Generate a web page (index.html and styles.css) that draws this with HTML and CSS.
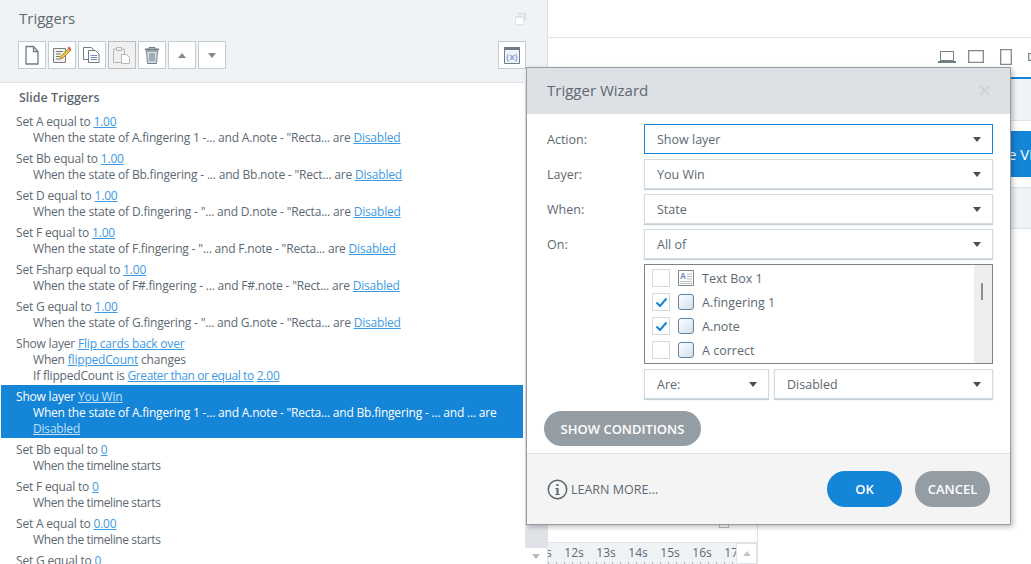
FILE: index.html
```html
<!DOCTYPE html>
<html lang="en">
<head>
    <meta charset="UTF-8">
    <title>Triggers</title>
    <link rel="stylesheet" href="styles.css">
</head>
<body>
    <div class="app">
        <!-- painel esquerdo -->
        <section class="panel">
            <header class="panel-head">
                <div class="panel-title">
                    <h1>Triggers</h1>
                    <svg class="restore" width="12" height="13" viewBox="0 0 12 13"><path d="M3 0.5h8.5v8H9V3H3z" fill="#dfe4e8"/><path d="M0.5 4.5h8v8h-8z" fill="#fff" stroke="#dfe4e8"/><path d="M0 4h9v2H0z" fill="#dfe4e8"/></svg>
                </div>
                <div class="toolbar">
                    <button class="tool"><svg width="20" height="22" viewBox="0 0 20 22"><path d="M4 2.500h7.500l4.500 5v12.500H4zM11.500 2.500v5h4.500" fill="#fff" stroke="#6f7d84" stroke-width="1.300"/></svg></button>
                    <button class="tool"><svg width="22" height="20" viewBox="0 0 22 20"><path d="M2.500 3.500h12v14h-12z" fill="#f2f2ee" stroke="#7b7f80"/><path d="M5 6.500h7M5 9h5M5 11.500h4M5 14h4" stroke="#777"/><path d="M9 14l1-3 8-8 2 2-8 8z" fill="#f2bf3a" stroke="#8a6a20" stroke-width=".6"/><path d="M16.500 3l1.500-1.500 2 2L18.500 5z" fill="#d9534f"/></svg></button>
                    <button class="tool"><svg width="22" height="20" viewBox="0 0 22 20"><path d="M2.500 2.500h8l2.500 3v9h-10.500z" fill="#fff" stroke="#6f7d84"/><path d="M7.500 5.500h7l3.500 3.500v8.500H7.500z" fill="#fff" stroke="#6f7d84"/><path d="M9.500 10.500h6.500M9.500 12.500h6.500M9.500 14.500h6.500" stroke="#6d8fc4"/></svg></button>
                    <button class="tool tool-off"><svg width="22" height="20" viewBox="0 0 22 20"><path d="M2.500 4h11v13.500h-11z" fill="#efefef" stroke="#b2b8bb"/><path d="M5.500 2.500h5v3h-5z" fill="#efefef" stroke="#b2b8bb"/><path d="M10.500 9.500h5l3 3v6h-8z" fill="#fff" stroke="#b2b8bb"/></svg></button>
                    <button class="tool"><svg width="20" height="22" viewBox="0 0 20 22"><path d="M3 5.500h14" stroke="#6f7d84" stroke-width="2"/><path d="M7 5V3.500h6V5" fill="none" stroke="#6f7d84"/><path d="M4.500 7h11l-1 12.500h-9z" fill="#d5dfe3" stroke="#6f7d84"/><path d="M8 9v8.500M10 9v8.500M12 9v8.500" stroke="#6f7d84"/></svg></button>
                    <button class="tool"><span class="tri-up"></span></button>
                    <button class="tool"><span class="tri-down"></span></button>
                    <button class="tool tool-var"><svg width="16" height="17" viewBox="0 0 16 17"><path d="M.5 .5h15v16H.5z" fill="#eef1f6" stroke="#6f7d84"/><path d="M0 0h16v3H0z" fill="#6f7d84"/><text x="8" y="13" class="var-text">(x)</text></svg></button>
                </div>
            </header>
            <div class="panel-body">
                <div class="trigger-list">
                    <h2>Slide Triggers</h2>
                    <div class="trigger">
                        <div>Set A equal to <a>1.00</a></div>
                        <div class="sub">When the state of A.fingering 1 -... and A.note - "Recta... are <a>Disabled</a></div>
                    </div>
                    <div class="trigger">
                        <div>Set Bb equal to <a>1.00</a></div>
                        <div class="sub">When the state of Bb.fingering - ... and Bb.note - "Rect... are <a>Disabled</a></div>
                    </div>
                    <div class="trigger">
                        <div>Set D equal to <a>1.00</a></div>
                        <div class="sub">When the state of D.fingering - "... and D.note - "Recta... are <a>Disabled</a></div>
                    </div>
                    <div class="trigger">
                        <div>Set F equal to <a>1.00</a></div>
                        <div class="sub">When the state of F.fingering - "... and F.note - "Recta... are <a>Disabled</a></div>
                    </div>
                    <div class="trigger">
                        <div>Set Fsharp equal to <a>1.00</a></div>
                        <div class="sub">When the state of F#.fingering - ... and F#.note - "Rect... are <a>Disabled</a></div>
                    </div>
                    <div class="trigger">
                        <div>Set G equal to <a>1.00</a></div>
                        <div class="sub">When the state of G.fingering - "... and G.note - "Recta... are <a>Disabled</a></div>
                    </div>
                    <div class="trigger">
                        <div>Show layer <a>Flip cards back over</a></div>
                        <div class="sub">When <a>flippedCount</a> changes</div>
                        <div class="sub">If flippedCount is <a class="tight">Greater than or equal to</a> <a>2.00</a></div>
                    </div>
                    <div class="trigger selected">
                        <div>Show layer <a>You Win</a></div>
                        <div class="sub">When the state of A.fingering 1 -... and A.note - "Recta... and Bb.fingering - ... and ... are</div>
                        <div class="sub"><a>Disabled</a></div>
                    </div>
                    <div class="trigger">
                        <div>Set Bb equal to <a>0</a></div>
                        <div class="sub tight">When the timeline starts</div>
                    </div>
                    <div class="trigger">
                        <div>Set F equal to <a>0</a></div>
                        <div class="sub tight">When the timeline starts</div>
                    </div>
                    <div class="trigger">
                        <div>Set A equal to <a>0.00</a></div>
                        <div class="sub tight">When the timeline starts</div>
                    </div>
                    <div class="trigger">
                        <div>Set G equal to <a>0</a></div>
                    </div>
                </div>
                <div class="list-scroll">
                    <div class="list-scroll-track"></div>
                    <div class="list-scroll-btn"><span class="tri-down light"></span></div>
                </div>
            </div>
        </section>

        <!-- palco atras do dialogo -->
        <section class="stage">
            <div class="stage-top"></div>
            <div class="devices">
                <svg width="18" height="14" viewBox="0 0 18 14"><path d="M2.500 1.500h13v9h-13z" fill="#fff" stroke="#6f7d84"/><path d="M0 11h18v2H0z" fill="#6f7d84"/></svg>
                <svg width="16" height="13" viewBox="0 0 16 13"><path d="M.7 .7h14.600v11.600H.7z" fill="#fff" stroke="#7c8a90" stroke-width="1.300"/></svg>
                <svg class="phone-v" width="12" height="16" viewBox="0 0 12 16"><path d="M.7 .7h10.600v14.600H.7z" fill="#fff" stroke="#7c8a90" stroke-width="1.300"/></svg>
                <svg class="phone-h" width="8" height="8" viewBox="0 0 8 8"><path d="M.7 .7h7v6.600h-7z" fill="#fff" stroke="#7c8a90" stroke-width="1.300"/></svg>
            </div>
            <div class="view-band"></div>
            <div class="view-btn-row"><button class="view-btn">e Vi</button></div>
            <div class="view-band view-band-b"></div>
            <div class="timeline">
                <div class="timeline-body"><span class="marker"></span></div>
                <div class="ruler">
                    <div class="ruler-labels">
                        <span>11s</span><span>12s</span><span>13s</span><span>14s</span><span>15s</span><span>16s</span><span>17s</span>
                    </div>
                    <div class="ruler-btn"><span class="tri-up light"></span></div>
                </div>
            </div>
        </section>
    </div>

    <!-- dialogo -->
    <div class="dialog">
        <div class="dialog-head">
            <h3>Trigger Wizard</h3>
            <svg width="11" height="11" viewBox="0 0 11 11"><path d="M1 1l9 9M10 1l-9 9" stroke="#cfd3d6" stroke-width="2"/></svg>
        </div>
        <div class="dialog-body">
            <div class="form-row">
                <label>Action:</label>
                <div class="select focus">Show layer<span class="caret"></span></div>
            </div>
            <div class="form-row">
                <label>Layer:</label>
                <div class="select">You Win<span class="caret"></span></div>
            </div>
            <div class="form-row">
                <label>When:</label>
                <div class="select">State<span class="caret"></span></div>
            </div>
            <div class="form-row">
                <label>On:</label>
                <div class="select">All of<span class="caret"></span></div>
            </div>
            <div class="form-row">
                <span></span>
                <div class="objects">
                    <div class="object-rows">
                        <div class="object">
                            <span class="check"></span>
                            <svg width="16" height="16" viewBox="0 0 16 16"><path d="M.5 .5h15v15H.5z" fill="#fff" stroke="#7d8a90"/><text x="5" y="9" class="box-a">A</text><path d="M9 4h5M9 6.500h5M9 9h5M2 11.500h12M2 13.500h12" stroke="#b8bec2"/></svg>
                            <span>Text Box 1</span>
                        </div>
                        <div class="object">
                            <span class="check"><svg width="13" height="11" viewBox="0 0 13 11"><path d="M1.500 5.500l3.500 3.500 6.500-7.500" fill="none" stroke="#1585d8" stroke-width="2"/></svg></span>
                            <span class="shape"></span>
                            <span>A.fingering 1</span>
                        </div>
                        <div class="object">
                            <span class="check"><svg width="13" height="11" viewBox="0 0 13 11"><path d="M1.500 5.500l3.500 3.500 6.500-7.500" fill="none" stroke="#1585d8" stroke-width="2"/></svg></span>
                            <span class="shape"></span>
                            <span>A.note</span>
                        </div>
                        <div class="object">
                            <span class="check"></span>
                            <span class="shape"></span>
                            <span>A correct</span>
                        </div>
                    </div>
                    <div class="objects-scroll"><span class="thumb"></span></div>
                </div>
            </div>
            <div class="form-row">
                <span></span>
                <div class="select-pair">
                    <div class="select select-are">Are:<span class="caret"></span></div>
                    <div class="select">Disabled<span class="caret"></span></div>
                </div>
            </div>
            <button class="pill pill-gray pill-show">SHOW CONDITIONS</button>
        </div>
        <div class="dialog-foot">
            <div class="learn">
                <svg width="21" height="21" viewBox="0 0 21 21"><circle cx="10.500" cy="10.500" r="9.200" fill="none" stroke="#56656e" stroke-width="1.500"/><path d="M9.500 5h2v2h-2zM8.500 9h3v6h1.200v1H8.300v-1h1.200v-5h-1z" fill="#56656e"/></svg>
                <span>LEARN MORE...</span>
            </div>
            <div class="foot-btns">
                <button class="pill pill-blue">OK</button>
                <button class="pill pill-gray">CANCEL</button>
            </div>
        </div>
    </div>
</body>
</html>
```

FILE: styles.css
```css
* {
    box-sizing: border-box;
}
html, body {
    height: 100%;
}
body {
    margin: 0;
    overflow: hidden;
    font-family: "Open Sans", "Noto Sans", sans-serif;
    font-size: 12px;
    color: #5d6972;
    background-color: #fff;
}
button {
    font-family: inherit;
}
.app {
    display: flex;
    height: 564px;
}

/* painel esquerdo */
.panel {
    width: 548px;
    flex: none;
    border-right: 1px solid #dfe3e6;
    display: flex;
    flex-direction: column;
}
.panel-head {
    height: 83px;
    flex: none;
    background-color: #f0f3f6;
    border-bottom: 1px solid #dfe3e6;
    padding: 0 21px 0 18px;
}
.panel-title {
    height: 41px;
    display: flex;
    justify-content: space-between;
    align-items: flex-start;
}
h1 {
    margin: 8px 0 0 1px;
    font-size: 15px;
    line-height: 20px;
    font-weight: 400;
    color: #5d6972;
}
.restore {
    margin: 12px -1px 0 0;
}
.toolbar {
    display: flex;
    gap: 2px;
}
.tool {
    width: 28px;
    height: 28px;
    padding: 0;
    display: flex;
    align-items: center;
    justify-content: center;
    background-color: #fff;
    border: 1px solid #c3ced4;
}
.tool-off {
    background-color: #f0f0f0;
    border-color: #b9bdbf;
}
.tool-var {
    margin-left: auto;
}
.var-text {
    font-size: 9px;
    font-weight: 700;
    text-anchor: middle;
    fill: #8ea6dc;
}
.tri-up, .tri-down {
    width: 0;
    height: 0;
    border-left: 4px solid transparent;
    border-right: 4px solid transparent;
}
.tri-up {
    border-bottom: 5px solid #7f8a90;
}
.tri-down {
    border-top: 5px solid #7f8a90;
}
.tri-up.light {
    border-bottom-color: #c2c8cc;
}
.tri-down.light {
    border-top-color: #b5bcc0;
}
.panel-body {
    flex: 1;
    display: flex;
    min-height: 0;
}
.trigger-list {
    width: 525px;
    flex: none;
    padding: 0 2px 0 1px;
    overflow: hidden;
}
h2 {
    margin: 6px 0 4px 18px;
    font-size: 12.500px;
    line-height: 17px;
    font-weight: 600;
    color: #5d6972;
}
.trigger {
    padding: 4px 0 1px 15px;
    line-height: 16px;
    letter-spacing: -0.19px;
    white-space: nowrap;
}
.sub {
    padding-left: 17px;
}
.tight {
    letter-spacing: -0.4px;
}
a {
    color: #3d9ae2;
    text-decoration: underline;
}
.selected {
    background-color: #1585d8;
    color: #fff;
}
.selected a {
    color: #bfe0f7;
}
.list-scroll {
    flex: 1;
    display: flex;
    flex-direction: column;
}
.list-scroll-track {
    flex: 1;
    background-color: #dfe3e8;
}
.list-scroll-btn {
    height: 16px;
    display: flex;
    justify-content: center;
    align-items: center;
    background-color: #fff;
}

/* palco */
.stage {
    flex: 1;
    display: flex;
    flex-direction: column;
    min-width: 0;
    overflow: hidden;
}
.stage-top {
    height: 38px;
    border-bottom: 1px solid #dfe3e6;
}
.devices {
    height: 41px;
    display: flex;
    align-items: center;
    justify-content: flex-end;
    gap: 12px;
    padding-bottom: 2px;
    margin-right: -5px;
    border-bottom: 2px solid #1585d8;
}
.phone-v {
    margin-left: 4px;
}
.phone-h {
    margin-left: 4px;
}
.view-band {
    height: 42px;
    background-color: #f0f3f6;
    border-bottom: 1px solid #dfe3e6;
}
.view-btn-row {
    height: 67px;
    padding-top: 10px;
    display: flex;
    justify-content: flex-end;
}
.view-btn {
    width: 60px;
    height: 46px;
    padding: 0 0 0 37px;
    border: none;
    font-size: 15px;
    color: #fff;
    white-space: nowrap;
    text-align: left;
    background-color: #1585d8;
}
.view-band-b {
    height: 42px;
    margin-top: -1px;
    border-top: 1px solid #dfe3e6;
}
.timeline {
    margin-top: auto;
    width: 210px;
    border-right: 1px solid #dfe3e6;
}
.timeline-body {
    height: 32px;
    display: flex;
    justify-content: flex-end;
    align-items: flex-end;
    padding: 0 28px 14px 0;
}
.marker {
    width: 10px;
    height: 8px;
    border: 1px solid #b9bfc3;
}
.ruler {
    height: 22px;
    display: flex;
    background-color: #f0f3f6;
    border-top: 1px solid #dfe3e6;
}
.ruler-labels {
    flex: 1;
    min-width: 0;
    overflow: hidden;
    display: flex;
    background: repeating-linear-gradient(90deg, #a9b0b5 0 1px, transparent 1px 8px) left bottom / 100% 2px no-repeat;
}
.ruler-labels span {
    flex: none;
    width: 32px;
    text-align: center;
    line-height: 20px;
}
.ruler-labels span:first-child {
    margin-left: -22px;
}
.ruler-btn {
    width: 21px;
    flex: none;
    display: flex;
    justify-content: center;
    align-items: center;
    background-color: #fff;
    border: 1px solid #dfe3e6;
}

/* dialogo */
.dialog {
    position: absolute;
    left: 526px;
    top: 67px;
    width: 485px;
    height: 458px;
    display: flex;
    flex-direction: column;
    background-color: #fff;
    border: 1px solid #9a9d9f;
    box-shadow: 2px 2px 5px rgba(0, 0, 0, 0.25);
}
.dialog-head {
    height: 46px;
    flex: none;
    display: flex;
    justify-content: space-between;
    align-items: center;
    padding: 0 20px 2px;
    background-color: #dde1e5;
}
h3 {
    margin: 0;
    font-size: 15px;
    font-weight: 400;
    color: #5d6972;
}
.dialog-body {
    flex: 1;
    padding: 10px 17px 0 20px;
    font-size: 12.500px;
}
.form-row {
    display: grid;
    grid-template-columns: 97px 1fr;
    align-items: center;
    margin-bottom: 5px;
}
.select {
    height: 30px;
    display: flex;
    align-items: center;
    justify-content: space-between;
    padding: 0 11px 0 12px;
    background-color: #fff;
    border: 1px solid #d3dbe0;
    box-shadow: 0 1px 1px #c5d0d6;
}
.select.focus {
    border-color: #1585d8;
    box-shadow: none;
}
.caret {
    width: 0;
    height: 0;
    border-left: 4px solid transparent;
    border-right: 4px solid transparent;
    border-top: 5px solid #4a4f53;
}
.objects {
    height: 100px;
    display: flex;
    border: 1px solid #7c8288;
}
.object-rows {
    flex: 1;
    padding: 1px 0 0 7px;
}
.object {
    height: 24px;
    display: flex;
    align-items: center;
    gap: 8px;
}
.check {
    width: 18px;
    height: 18px;
    display: flex;
    align-items: center;
    justify-content: center;
    border: 1px solid #d3dbe0;
}
.shape {
    width: 16px;
    height: 16px;
    border: 1.500px solid #5d7f9d;
    border-radius: 3px;
    background: linear-gradient(135deg, #fff, #cfe0ee);
}
.objects-scroll {
    width: 18px;
    padding: 18px 0 0 7px;
    background-color: #eeeeee;
}
.thumb {
    display: block;
    width: 2px;
    height: 17px;
    background-color: #8a8f93;
}
.select-pair {
    display: flex;
    gap: 5px;
}
.select-pair .select {
    flex: 1;
}
.select-pair .select-are {
    flex: none;
    width: 125px;
}
.pill {
    border: none;
    border-radius: 18px;
    height: 36px;
    padding: 0;
    font-size: 13px;
    font-weight: 600;
    color: #fff;
}
.pill-show {
    width: 157px;
    height: 35px;
    margin: 7px 0 0 -3px;
}
.pill-gray {
    background-color: #949da3;
}
.pill-blue {
    background-color: #1585d8;
}
.dialog-foot {
    height: 71px;
    flex: none;
    display: flex;
    align-items: center;
    justify-content: space-between;
    padding: 0 20px;
    background-color: #f4f4f4;
    border-top: 1px solid #dfe3e6;
}
.learn {
    display: flex;
    align-items: center;
    gap: 3px;
    font-size: 12.500px;
}
.foot-btns {
    display: flex;
    gap: 13px;
}
.foot-btns .pill {
    width: 75px;
}
.box-a {
    font-size: 8px;
    font-weight: 700;
    text-anchor: middle;
    fill: #6d8fc4;
}
```
